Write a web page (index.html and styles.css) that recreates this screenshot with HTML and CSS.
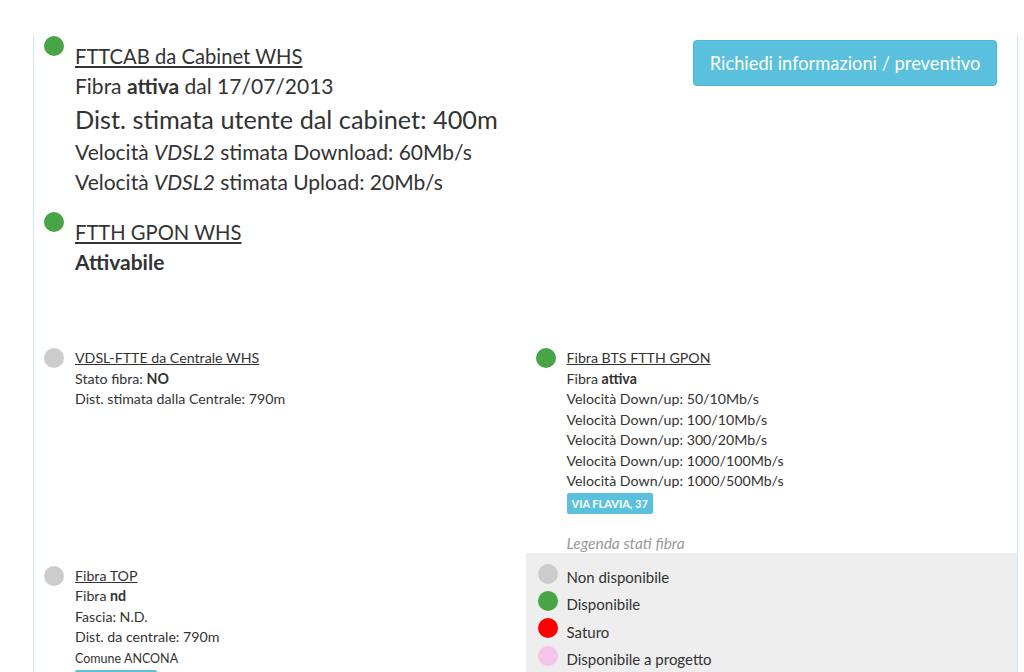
FILE: index.html
```html
<!DOCTYPE html>
<html lang="it">
<head>
    <meta charset="UTF-8">
    <title>Verifica copertura fibra</title>
    <link rel="stylesheet" href="styles.css">
</head>
<body>
    <div class="coverage">
        <div class="main-row">
            <div class="main-services">
                <div class="service service-lg">
                    <span class="dot dot-green"></span>
                    <div class="service-body">
                        <a class="service-title" href="#">FTTCAB da Cabinet WHS</a>
                        <div class="line">Fibra <b>attiva</b> dal 17/07/2013</div>
                        <div class="line line-xl">Dist. stimata utente dal cabinet: 400m</div>
                        <div class="line">Velocità <i>VDSL2</i> stimata Download: 60Mb/s</div>
                        <div class="line">Velocità <i>VDSL2</i> stimata Upload: 20Mb/s</div>
                    </div>
                </div>
                <div class="service service-lg">
                    <span class="dot dot-green"></span>
                    <div class="service-body">
                        <a class="service-title" href="#">FTTH GPON WHS</a>
                        <div class="line"><b>Attivabile</b></div>
                    </div>
                </div>
            </div>
            <button class="btn-info">Richiedi informazioni / preventivo</button>
        </div>

        <div class="services-grid">
            <div class="service">
                <span class="dot dot-grey"></span>
                <div class="service-body">
                    <a class="service-title" href="#">VDSL-FTTE da Centrale WHS</a>
                    <div class="line">Stato fibra: <b>NO</b></div>
                    <div class="line">Dist. stimata dalla Centrale: 790m</div>
                </div>
            </div>
            <div class="service">
                <span class="dot dot-green"></span>
                <div class="service-body">
                    <a class="service-title" href="#">Fibra BTS FTTH GPON</a>
                    <div class="line">Fibra <b>attiva</b></div>
                    <div class="line">Velocità Down/up: 50/10Mb/s</div>
                    <div class="line">Velocità Down/up: 100/10Mb/s</div>
                    <div class="line">Velocità Down/up: 300/20Mb/s</div>
                    <div class="line">Velocità Down/up: 1000/100Mb/s</div>
                    <div class="line">Velocità Down/up: 1000/500Mb/s</div>
                    <span class="badge">VIA FLAVIA, 37</span>
                </div>
            </div>
            <div class="service service-bottom">
                <span class="dot dot-grey"></span>
                <div class="service-body">
                    <a class="service-title" href="#">Fibra TOP</a>
                    <div class="line">Fibra <b>nd</b></div>
                    <div class="line">Fascia: N.D.</div>
                    <div class="line">Dist. da centrale: 790m</div>
                    <div class="line line-sm">Comune ANCONA</div>
                    <span class="badge badge-wide"></span>
                </div>
            </div>
            <div class="legend">
                <div class="legend-title">Legenda stati fibra</div>
                <div class="legend-box">
                    <div class="legend-item"><span class="dot dot-grey"></span>Non disponibile</div>
                    <div class="legend-item"><span class="dot dot-green"></span>Disponibile</div>
                    <div class="legend-item"><span class="dot dot-red"></span>Saturo</div>
                    <div class="legend-item"><span class="dot dot-pink"></span>Disponibile a progetto</div>
                </div>
            </div>
        </div>
    </div>
</body>
</html>
```

FILE: styles.css
```css
body {
    margin: 0;
    font-family: Lato, "Open Sans", sans-serif;
    color: #333;
    background-color: white;
    overflow: hidden;
}
.coverage {
    margin: 35px 0 0 33px;
    width: 983px;
    border-left: 1px solid #c9e8f5;
    border-right: 1px solid #c9e8f5;
    min-height: 700px;
}
.main-row {
    display: flex;
    justify-content: space-between;
    align-items: flex-start;
    padding: 1px 20px 0 10px;
}
.service {
    display: flex;
    align-items: flex-start;
    gap: 11px;
    font-size: 14.2px;
    line-height: 20.5px;
}
.dot {
    flex: none;
    display: inline-block;
    width: 20px;
    height: 20px;
    border-radius: 50%;
}
.dot-green { background-color: #47a447; }
.dot-grey { background-color: #cccccc; }
.dot-red { background-color: #ff0000; }
.dot-pink { background-color: #f5c4e6; }
.service-title {
    color: #333;
    text-decoration: underline;
}
.service-lg {
    font-size: 21px;
    line-height: 30px;
}
.service-lg .service-body {
    padding-top: 5px;
}
.service-lg + .service-lg {
    margin-top: 15px;
}
.service-lg .service-title {
    font-size: 20.2px;
}
.line-xl {
    font-size: 25.3px;
    line-height: 36px;
}
.line-sm {
    font-size: 12.5px;
    line-height: 22px;
}
.btn-info {
    margin-top: 4px;
    width: 304px;
    height: 46px;
    background-color: #5bc0de;
    border: 1px solid #46b8da;
    border-radius: 4px;
    color: white;
    font-family: inherit;
    font-size: 18.3px;
    cursor: pointer;
}
.services-grid {
    display: grid;
    grid-template-columns: 1fr 1fr;
    row-gap: 19px;
    margin-top: 71px;
}
.services-grid .service {
    padding-left: 10px;
}
.badge {
    display: inline-block;
    margin-top: 1px;
    padding: 0 5px;
    height: 21px;
    line-height: 21px;
    background-color: #5bc0de;
    border-radius: 2px;
    color: white;
    font-size: 11px;
    font-weight: bold;
}
.badge-wide {
    width: 72px;
    margin-top: 0;
}
.service-bottom {
    padding-top: 33px;
}
.legend-title {
    padding-left: 41px;
    font-size: 15.5px;
    font-style: italic;
    line-height: 20px;
    color: #999;
}
.legend-box {
    background-color: #eeeeee;
    padding: 11px 12px 10px;
}
.legend-item {
    display: flex;
    align-items: center;
    gap: 9px;
    font-size: 15px;
    height: 27.3px;
}
.legend-item .dot {
    margin-top: -7px;
}
```
